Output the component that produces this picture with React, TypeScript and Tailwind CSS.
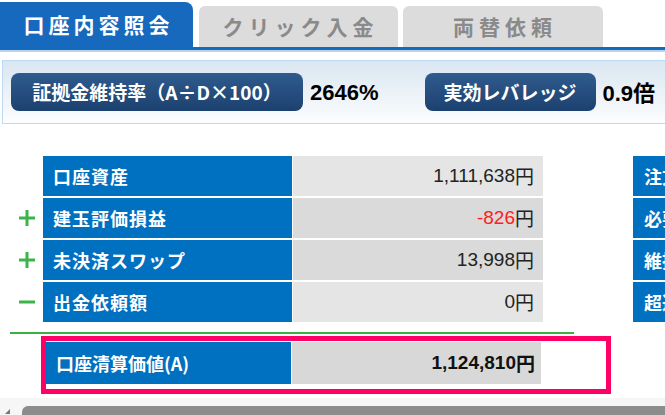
import React from "react";

const jp = { fontFamily: '"Noto Sans CJK JP", "Liberation Sans", sans-serif' };
const num = { fontFamily: '"Liberation Sans", "Noto Sans CJK JP", sans-serif' };

function Sign({ s }: { s: string }) {
  if (s === "+")
    return (
      <svg width="16" height="16" viewBox="0 0 16 16">
        <rect x="0" y="6.5" width="16" height="3" fill="#3bb54a" />
        <rect x="6.5" y="0" width="3" height="16" fill="#3bb54a" />
      </svg>
    );
  if (s === "-")
    return (
      <svg width="16" height="16" viewBox="0 0 16 16">
        <rect x="0" y="6.5" width="16" height="3" fill="#3bb54a" />
      </svg>
    );
  return <span />;
}

const rows = [
  { sign: "", label: "口座資産", value: "1,111,638", neg: false, bg: "bg-[#e5e5e5]" },
  { sign: "+", label: "建玉評価損益", value: "-826", neg: true, bg: "bg-[#dadada]" },
  { sign: "+", label: "未決済スワップ", value: "13,998", neg: false, bg: "bg-[#dadada]" },
  { sign: "-", label: "出金依頼額", value: "0", neg: false, bg: "bg-[#e5e5e5]" },
];

const rightRows = ["注文証拠金", "必要証拠金", "維持証拠金", "超過証拠金"];

export default function App() {
  return (
    <div className="w-[665px] h-[415px] overflow-hidden bg-white relative" style={jp}>
      {/* Tabs */}
      <div className="flex items-end h-[47px] pt-[2px]">
        <div className="w-[193px] h-[45px] bg-[#1769bd] rounded-tr-[8px] flex items-center justify-center text-white text-[21px] font-bold tracking-[4px] pl-[4px]">
          口座内容照会
        </div>
        <div className="ml-[6px] w-[199px] h-[41px] bg-[#dcdcdc] rounded-t-[6px] flex items-center justify-center text-[#8a8a8a] text-[21px] font-bold tracking-[5px] pl-[4px]">
          クリック入金
        </div>
        <div className="ml-[5px] w-[200px] h-[41px] bg-[#dcdcdc] rounded-t-[6px] flex items-center justify-center text-[#8a8a8a] text-[21px] font-bold tracking-[5px] pl-[4px]">
          両替依頼
        </div>
      </div>
      <div className="h-[3px] bg-[#1769bd]" />
      <div className="h-[2px] bg-[#b8d5ee]" />

      {/* Info bar */}
      <div className="mt-[8px] ml-[2px] w-[700px] h-[64px] border border-[#bcdaf3] bg-gradient-to-b from-[#dae6f1] to-[#fcfdfe] flex items-center pl-[8px]">
        <div className="h-[38px] w-[292px] rounded-[8px] bg-gradient-to-b from-[#2f5b8e] to-[#1c416f] flex items-center justify-center text-white text-[19px] font-bold whitespace-nowrap">
          証拠金維持率（A÷D×100）
        </div>
        <div className="ml-[7px] text-[22px] font-bold text-black" style={num}>2646%</div>
        <div className="ml-[46px] h-[38px] w-[171px] rounded-[8px] bg-gradient-to-b from-[#2f5b8e] to-[#1c416f] flex items-center justify-center text-white text-[19px] font-bold whitespace-nowrap">
          実効レバレッジ
        </div>
        <div className="ml-[7px] text-[22px] font-bold text-black whitespace-nowrap" style={num}>
          0.9<span style={jp}>倍</span>
        </div>
      </div>

      {/* Tables */}
      <div className="mt-[32px] flex">
        <div className="flex flex-col gap-[2px]">
          {rows.map((r) => (
            <div key={r.label} className="flex h-[40px]">
              <div className="w-[43px] flex items-center justify-center pl-[12px] pr-[2px]">
                <Sign s={r.sign} />
              </div>
              <div className="w-[249px] bg-[#0070c0] flex items-center pl-[10px] text-white text-[18px] font-bold tracking-[1px]">
                {r.label}
              </div>
              <div className={`w-[250px] ml-[1px] ${r.bg} flex items-center justify-end pr-[9px] text-[19px] text-[#222]`} style={num}>
                <span className={r.neg ? "text-[#ff2020]" : ""}>{r.value}</span>
                <span style={jp}>円</span>
              </div>
            </div>
          ))}
        </div>
        <div className="ml-[90px] flex flex-col gap-[2px]">
          {rightRows.map((l) => (
            <div key={l} className="h-[40px] w-[200px] bg-[#0070c0] flex items-center pl-[11px] text-white text-[18px] font-bold whitespace-nowrap">
              {l}
            </div>
          ))}
        </div>
      </div>

      {/* Green line */}
      <div className="mt-[10px] ml-[10px] w-[564px] h-[2px] bg-[#3cb043]" />

      {/* Total */}
      <div className="mt-[2px] ml-[41px] w-[570px] h-[58px] border-[5px] border-[#ff0066] pt-[1px]">
        <div className="flex h-[42px]">
          <div className="w-[245px] bg-[#0070c0] flex items-center pl-[10px] text-white text-[18px] font-bold">
            口座清算価値(A)
          </div>
          <div className="w-[249px] ml-[1px] bg-[#d8d8d8] flex items-center justify-end pr-[6px] text-[19px] font-bold text-[#111]" style={num}>
            1,124,810<span style={jp}>円</span>
          </div>
        </div>
      </div>

      {/* Scrollbar */}
      <div className="mt-[4px] h-[8px] bg-[#f6f6f6]" />
      <div className="flex items-center h-[12px] bg-[#f6f6f6]">
        <svg width="14" height="12" viewBox="0 0 14 12" className="ml-[2px]">
          <path d="M8 3 L3 8 L8 8 Z" fill="#777" />
        </svg>
        <div className="ml-[6px] flex-1 h-[12px] rounded-tl-[6px] bg-[#8c8c8c]" />
      </div>
    </div>
  );
}
